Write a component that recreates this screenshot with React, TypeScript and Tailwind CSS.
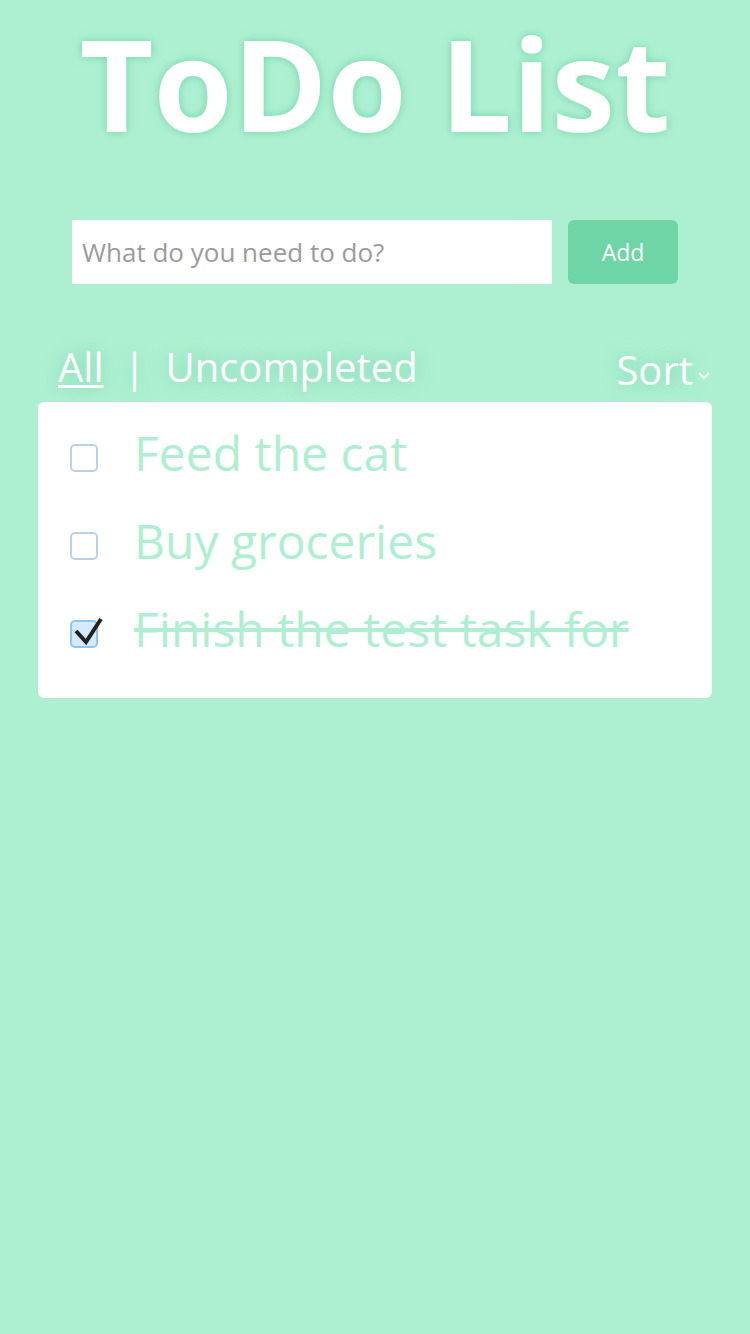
import React from "react";

const items = [
  { text: "Feed the cat", done: false },
  { text: "Buy groceries", done: false },
  { text: "Finish the test task for", done: true },
];

function Checkbox({ checked }: { checked: boolean }) {
  if (!checked) {
    return (
      <div className="relative w-[28px] h-[28px] shrink-0 rounded-[5px] border-2 border-[#b8d1e8] bg-white" />
    );
  }
  return (
    <div className="relative w-[28px] h-[28px] shrink-0 rounded-[5px] border-2 border-[#8cc6f9] bg-[#d5ebfd]">
      <svg
        className="absolute left-0 top-0 overflow-visible"
        width="28"
        height="28"
        viewBox="0 0 28 28"
      >
        <path
          d="M4 9 L14 20 L29 -3"
          fill="none"
          stroke="#222"
          strokeWidth="4"
          strokeLinecap="butt"
          strokeLinejoin="miter"
        />
      </svg>
    </div>
  );
}

export default function App() {
  return (
    <div className="min-h-screen w-full bg-[#adf0d1] font-['Open_Sans',sans-serif] flex flex-col">
      <h1 className="self-center px-2 text-center text-[128px] leading-[1.3] font-bold text-white whitespace-nowrap [text-shadow:0_0_8px_rgba(70,195,140,0.6)]">
        ToDo List
      </h1>

      <div className="mt-[54px] flex justify-center gap-4">
        <input
          className="w-[480px] h-[64px] bg-white px-[10px] text-[26px] text-[#555] placeholder:text-[#9b9b9b] outline-none"
          placeholder="What do you need to do?"
        />
        <button className="w-[110px] h-[64px] rounded-[6px] bg-[#6dd5a6] text-white text-[23px]">
          Add
        </button>
      </div>

      <div className="mx-[38px] h-[118px] flex justify-between items-end text-white">
        <div className="flex items-center gap-[20px] pl-[20px] pb-[15px] text-[40px] leading-none [text-shadow:0_0_18px_rgba(60,185,130,0.45)]">
          <span className="underline underline-offset-[3px] decoration-[3px]">All</span>
          <span>|</span>
          <span>Uncompleted</span>
        </div>
        <div className="flex items-end pb-[12px] pr-[1px] [text-shadow:0_0_18px_rgba(60,185,130,0.45)]">
          <span className="text-[40px] leading-none">Sort</span>
          <svg width="14" height="10" viewBox="0 0 14 10" className="ml-[4px] mb-[9px]">
            <path d="M2 2 L7 7 L12 2" fill="none" stroke="white" strokeWidth="2" />
          </svg>
        </div>
      </div>

      <div className="mx-[38px] h-[296px] rounded-[6px] bg-white pt-[12px] pl-[32px] pr-[20px]">
        {items.map((it) => (
          <div key={it.text} className="h-[88px] flex items-center">
            <Checkbox checked={it.done} />
            <span
              className={
                "ml-[36px] mb-[10px] whitespace-nowrap text-[48px] leading-none text-[#adf0d1] " +
                (it.done ? "line-through" : "")
              }
            >
              {it.text}
            </span>
          </div>
        ))}
      </div>
    </div>
  );
}
